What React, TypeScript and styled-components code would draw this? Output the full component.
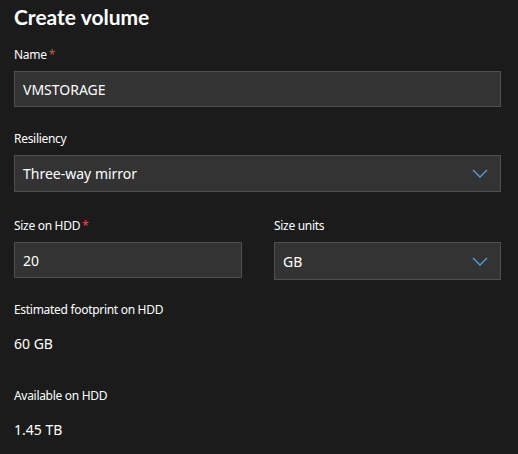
import styled, { createGlobalStyle } from "styled-components";

const Global = createGlobalStyle`
  html, body {
    margin: 0;
    padding: 0;
    background: #1b1b1b;
  }
  body {
    font-family: "Noto Sans", "Open Sans", sans-serif;
    color: #ffffff;
  }
`;

const Panel = styled.div`
  width: 518px;
  height: 454px;
  box-sizing: border-box;
  padding: 0 17px 0 14px;
  background: #1b1b1b;
  overflow: hidden;
`;

const Title = styled.h1`
  margin: 0;
  padding-top: 2px;
  font-family: Lato, "Noto Sans", sans-serif;
  font-size: 21px;
  font-weight: 700;
  line-height: 29px;
  color: #ffffff;
`;

const Field = styled.div<{ $top: number }>`
  display: flex;
  flex-direction: column;
  margin-top: ${(p) => p.$top}px;
`;

const Label = styled.label<{ $gap?: number }>`
  font-size: 12px;
  line-height: 16px;
  letter-spacing: -0.3px;
  color: #ffffff;
  margin-bottom: ${(p) => p.$gap ?? 8}px;
`;

const Star = styled.span`
  color: #e8464b;
  margin-left: 2px;
`;

const Box = styled.div<{ $h?: number }>`
  height: ${(p) => p.$h ?? 36}px;
  box-sizing: border-box;
  border: 1px solid #4f4f4f;
  background: #333333;
  display: flex;
  align-items: center;
  padding: 0 12px 0 8px;
  font-size: 14px;
  color: #ffffff;
`;

const Value = styled.span`
  flex: 1;
`;

const Row = styled.div`
  display: grid;
  grid-template-columns: 228px 227px;
  column-gap: 32px;
  margin-top: 26px;
`;

const Info = styled.div`
  font-size: 14px;
  line-height: 20px;
  color: #ffffff;
`;

const Chevron = () => (
  <svg width="16" height="9" viewBox="0 0 16 9" fill="none">
    <path d="M1 1 L8 8 L15 1" stroke="#5a9bdc" strokeWidth="1.3" />
  </svg>
);

const App = () => {
  return (
    <Panel>
      <Global />
      <Title>Create volume</Title>
      <Field $top={16}>
        <Label>
          Name<Star>*</Star>
        </Label>
        <Box>
          <Value>VMSTORAGE</Value>
        </Box>
      </Field>
      <Field $top={24}>
        <Label>Resiliency</Label>
        <Box $h={37}>
          <Value>Three-way mirror</Value>
          <Chevron />
        </Box>
      </Field>
      <Row>
        <Field $top={0}>
          <Label>
            Size on HDD<Star>*</Star>
          </Label>
          <Box>
            <Value>20</Value>
          </Box>
        </Field>
        <Field $top={0}>
          <Label>Size units</Label>
          <Box $h={38}>
            <Value>GB</Value>
            <Chevron />
          </Box>
        </Field>
      </Row>
      <Field $top={22}>
        <Label $gap={16}>Estimated footprint on HDD</Label>
        <Info>60 GB</Info>
      </Field>
      <Field $top={34}>
        <Label $gap={16}>Available on HDD</Label>
        <Info>1.45 TB</Info>
      </Field>
    </Panel>
  );
};

export default App;
